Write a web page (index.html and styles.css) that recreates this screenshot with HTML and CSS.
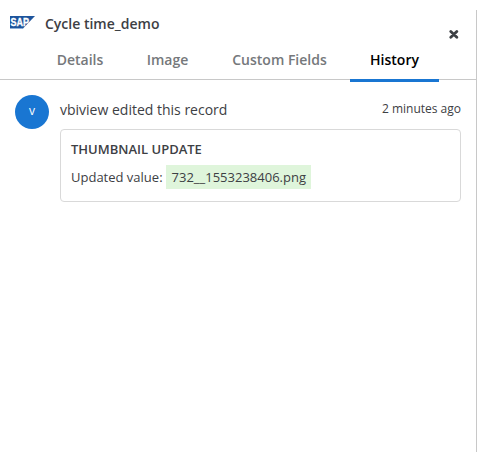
FILE: index.html
```html
<!DOCTYPE html>
<html lang="en">
<head>
<meta charset="utf-8">
<title>Cycle time_demo</title>
<link rel="stylesheet" href="styles.css">
</head>
<body>
<div class="panel">
  <header class="header">
    <svg class="logo" width="25" height="13" viewBox="0 0 25 13">
      <path d="M0 0H25L12.5 13H0Z" fill="#1d549c"/>
      <path d="M0 12H13.5L12.5 13H0Z" fill="#8fb0d8"/>
      <text class="logo-text" x="0.6" y="10.2" textLength="18.5" lengthAdjust="spacingAndGlyphs">SAP</text>
    </svg>
    <h1 class="title">Cycle time_demo</h1>
    <button class="close" aria-label="Close">
      <svg width="10" height="10" viewBox="0 0 10 10"><path d="M1.8 2.4L7.8 8.2M7.8 2.4L1.8 8.2" stroke="#3d4044" stroke-width="2.8" stroke-linecap="round"/></svg>
    </button>
  </header>
  <nav class="tabs">
    <a class="tab tab-details">Details</a>
    <a class="tab tab-image">Image</a>
    <a class="tab tab-custom">Custom Fields</a>
    <a class="tab tab-history active">History</a>
  </nav>
  <main class="entry">
    <div class="avatar">v</div>
    <div class="body">
      <div class="summary">
        <span class="action">vbiview edited this record</span>
        <span class="time">2 minutes ago</span>
      </div>
      <section class="card">
        <h2 class="card-title">THUMBNAIL UPDATE</h2>
        <div class="change"><span class="label">Updated value:</span><span class="value">732__1553238406.png</span></div>
      </section>
    </div>
  </main>
</div>
</body>
</html>
```
FILE: styles.css
```css
* { box-sizing: border-box; }
body {
  margin: 0;
  padding-top: 10px;
  background: #fff;
  color: #3d4044;
  font-family: "Open Sans", sans-serif;
  overflow: hidden;
}
.panel { height: 442px; border-right: 1px solid #c8c8c8; }
.header {
  display: flex;
  align-items: flex-start;
  height: 31px;
  padding: 4px 17px 0 10px;
}
.logo { display: block; flex: none; margin-top: 2px; }
.logo-text { font: bold 11px "Liberation Sans", sans-serif; fill: #fff; stroke: #fff; stroke-width: 0.3px; }
.title {
  flex: 1;
  margin: 0 0 0 10px;
  font-size: 14px;
  line-height: 20px;
  font-weight: 600;
}
.close {
  width: 10px;
  height: 10px;
  margin-top: 15px;
  padding: 0;
  border: 0;
  background: none;
}
.close svg { display: block; }
.tabs {
  display: flex;
  height: 39px;
  padding-left: 36px;
  border-bottom: 1px solid #c8c8c8;
}
.tab {
  height: 41px;
  padding-top: 9px;
  font-size: 14px;
  line-height: 20px;
  font-weight: 600;
  text-align: center;
  white-space: nowrap;
  color: #75787b;
}
.tab-details { width: 88px; }
.tab-image { width: 87px; }
.tab-custom { width: 137px; }
.tab-history { width: 89px; margin-left: 2px; }
.tab.active { color: #000; border-bottom: 3px solid #1976d2; }
.entry { display: flex; gap: 11px; padding: 15px 15px 0; }
.avatar {
  flex: none;
  width: 34px;
  height: 34px;
  border-radius: 50%;
  background: #1976d2;
  color: #fff;
  font-size: 12px;
  line-height: 31px;
  text-align: center;
}
.body { flex: 1; }
.summary { display: flex; justify-content: space-between; height: 34px; }
.action { padding-top: 5px; font-size: 14px; line-height: 20px; }
.time { padding-top: 4px; font-size: 12px; line-height: 20px; }
.card {
  height: 73px;
  padding: 9px 10px;
  border: 1px solid #d9d9d9;
  border-radius: 4px;
}
.card-title { margin: 0; font-size: 13px; line-height: 20px; font-weight: 600; }
.change {
  display: flex;
  align-items: center;
  margin-top: 6px;
  font-size: 13px;
  line-height: 24px;
}
.value { margin-left: 3px; padding: 0 5px 0 6px; background: #dff5db; }
```
